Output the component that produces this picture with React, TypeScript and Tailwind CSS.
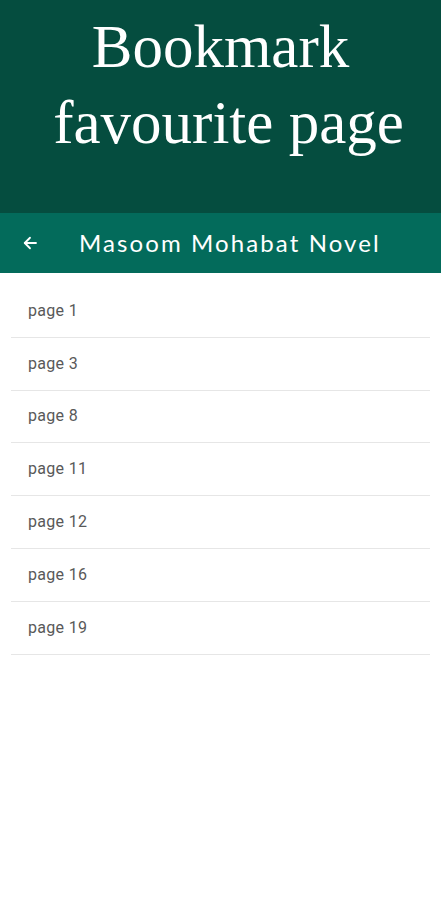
import React from "react";

const pages = [1, 3, 8, 11, 12, 16, 19];

export default function App() {
  return (
    <div className="w-[441px] h-[900px] bg-white flex flex-col">
      <div className="h-[213px] bg-[#054d3f] flex flex-col items-center pt-[9px] text-white" style={{ fontFamily: '"Liberation Serif", serif' }}>
        <div className="text-[61px] leading-[76px]">Bookmark</div>
        <div className="text-[61px] leading-[76px] ml-[16px]">favourite page</div>
      </div>
      <div className="h-[60px] bg-[#036b5b] flex items-center text-white">
        <svg className="ml-[21px]" width="18" height="18" viewBox="0 0 24 24" fill="none" stroke="white" strokeWidth="2.4" strokeLinecap="round" strokeLinejoin="round">
          <path d="M20 12H5" />
          <path d="M12 5l-7 7 7 7" />
        </svg>
        <div className="ml-[40px] text-[24px] tracking-[2.1px]" style={{ fontFamily: 'Lato, sans-serif' }}>Masoom Mohabat Novel</div>
      </div>
      <div className="pt-[12px] px-[11px] flex flex-col">
        {pages.map((p) => (
          <div key={p} className="h-[52.8px] border-b border-[#e6e6e6] flex items-center pl-[17px] text-[16px] tracking-[0.3px] text-[#595959]" style={{ fontFamily: 'Roboto, sans-serif' }}>
            page {p}
          </div>
        ))}
      </div>
    </div>
  );
}
